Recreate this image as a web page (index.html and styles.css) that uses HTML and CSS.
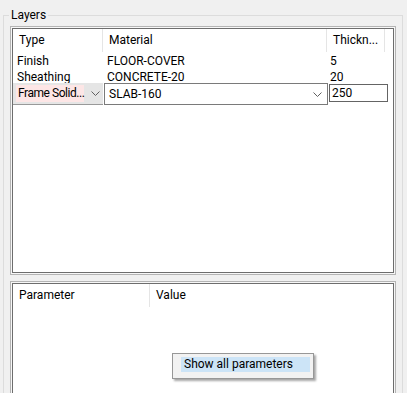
FILE: index.html
```html
<!DOCTYPE html>
<html lang="en">
<head>
    <meta charset="UTF-8">
    <title>Layers</title>
    <link rel="stylesheet" href="styles.css">
</head>
<body>
    <fieldset class="group">
        <legend>Layers</legend>

        <div class="panel layers">
            <div class="list">
                <div class="row head">
                    <div class="col type">Type</div>
                    <div class="col material">Material</div>
                    <div class="col thick">Thickn...</div>
                    <div class="col rest"></div>
                </div>
                <div class="row item first">
                    <div class="col type">Finish</div>
                    <div class="col material">FLOOR-COVER</div>
                    <div class="col thick">5</div>
                </div>
                <div class="row item second">
                    <div class="col type">Sheathing</div>
                    <div class="col material">CONCRETE-20</div>
                    <div class="col thick">20</div>
                </div>
                <div class="row edit">
                    <div class="combo type-combo">
                        <span class="picked">Frame Solid...</span>
                        <svg class="chevron" width="9" height="5" viewBox="0 0 9 5"><path d="M0.5 0.5 L4.5 4.5 L8.5 0.5" fill="none" stroke="#606060"/></svg>
                    </div>
                    <div class="combo mat-combo">
                        <span>SLAB-160</span>
                        <svg class="chevron" width="9" height="5" viewBox="0 0 9 5"><path d="M0.5 0.5 L4.5 4.5 L8.5 0.5" fill="none" stroke="#606060"/></svg>
                    </div>
                    <div class="textbox">250</div>
                </div>
            </div>
        </div>

        <div class="panel params">
            <div class="list">
                <div class="row head">
                    <div class="col param">Parameter</div>
                    <div class="col value">Value</div>
                </div>
            </div>
        </div>
    </fieldset>

    <div class="menu">
        <div class="menu-item">Show all parameters</div>
    </div>
</body>
</html>
```

FILE: styles.css
```css
html, body {
    margin: 0;
    height: 393px;
    overflow: hidden;
}
body {
    background-color: #f0f0f0;
    font-family: Roboto, Arial, sans-serif;
    font-size: 12px;
    color: #000;
    position: relative;
}
.group {
    margin: 8px 4px 0 3px;
    padding: 0 6px 0 6px;
    border: 1px solid #dcdcdc;
    min-width: 0;
    height: 420px;
}
.group legend {
    margin-left: -1px;
    padding: 0 2px;
    line-height: 14px;
    height: 14px;
}
.panel {
    border: 1px solid #b4b4b4;
    padding: 1px;
    background-color: #f7f7f7;
}
.panel .list {
    border: 1px solid #6d6d6d;
    background-color: #fff;
    height: 100%;
    box-sizing: border-box;
}
.layers {
    margin-top: 4px;
    height: 245px;
}
.params {
    margin-top: 6px;
    height: 160px;
}
.row {
    display: flex;
}
.row.head {
    height: 23px;
    line-height: 22px;
}
.row.head .col {
    border-right: 1px solid #e5e5e5;
    box-sizing: border-box;
    height: 23px;
}
.row.head .type { padding-left: 6px; }
.row.head .material { padding-left: 6px; }
.row.head .thick { padding-left: 6px; }
.col.type { width: 90px; padding-left: 4px; box-sizing: border-box; }
.col.material { width: 224px; padding-left: 4px; box-sizing: border-box; }
.col.thick { width: 58px; padding-left: 3px; box-sizing: border-box; }
.row.head .col.rest { border-right: none; flex: 1; }
.row.item {
    white-space: nowrap;
}
.row.first {
    height: 16px;
    line-height: 18px;
}
.row.second {
    height: 15px;
    line-height: 19px;
}
.row.edit {
    height: 22px;
}
.combo {
    box-sizing: border-box;
    height: 22px;
    display: flex;
    align-items: center;
}
.type-combo {
    width: 90px;
    background-color: #e5e5e5;
    border-bottom: 1px solid #999;
    padding: 0 0 0 3px;
}
.type-combo .picked {
    background-color: #fde6e6;
    color: #000;
    height: 17px;
    line-height: 17px;
    width: 68px;
    padding-left: 2px;
    box-sizing: border-box;
    white-space: nowrap;
    letter-spacing: -0.45px;
}
.type-combo .chevron {
    margin-left: 7px;
}
.mat-combo {
    width: 224px;
    background-color: #fff;
    border: 1px solid #7a7a7a;
    margin-left: 1px;
    padding-left: 4px;
    justify-content: space-between;
}
.mat-combo .chevron {
    margin-right: 5px;
}
.textbox {
    box-sizing: border-box;
    width: 59px;
    height: 18px;
    margin: 1px 0 0 1px;
    border: 1px solid #646464;
    background-color: #fff;
    padding-left: 2px;
    line-height: 16px;
}
.col.param {
    width: 137px;
    padding-left: 6px;
    box-sizing: border-box;
}
.col.value {
    padding-left: 6px;
    border-right: none !important;
}
.menu {
    position: absolute;
    left: 172px;
    top: 353px;
    width: 142px;
    height: 26px;
    box-sizing: border-box;
    border: 1px solid #979797;
    background-color: #f2f2f2;
    padding: 3px 3px 0 8px;
    box-shadow: 2px 2px 2px rgba(0, 0, 0, 0.35);
}
.menu-item {
    background-color: #cce4f7;
    height: 15px;
    line-height: 15px;
    padding-left: 3px;
    white-space: nowrap;
}
```
